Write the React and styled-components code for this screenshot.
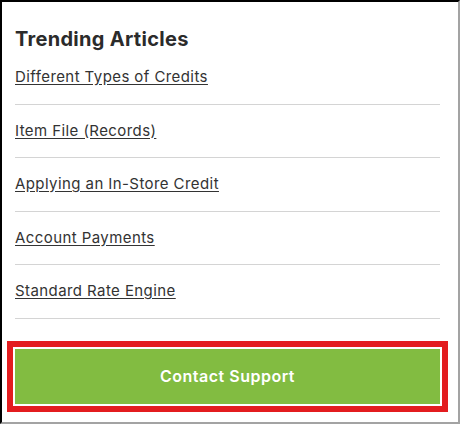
import React from "react";
import styled, { createGlobalStyle } from "styled-components";

const GlobalStyle = createGlobalStyle`
  html, body {
    margin: 0;
    padding: 0;
    background: #fff;
  }
  * {
    box-sizing: border-box;
  }
`;

const Panel = styled.section`
  width: 460px;
  height: 424px;
  border-top: 2px solid #000;
  border-left: 2px solid #000;
  border-right: 2px solid #a3a3a3;
  border-bottom: 2px solid #a3a3a3;
  padding: 24px 18px 0 13px;
  font-family: Inter, "Open Sans", Arial, sans-serif;
  background: #fff;
`;

const Title = styled.h2`
  margin: 0 0 15px;
  font-size: 20px;
  line-height: 26px;
  font-weight: 700;
  letter-spacing: 0.3px;
  color: #2b2b2b;
`;

const List = styled.ul`
  list-style: none;
  margin: 0;
  padding: 0;
`;

const Item = styled.li`
  padding: ${(p) => (p.first ? "0" : "16px")} 0 16px;
  border-bottom: 1px solid #d4d4d4;
  font-size: 15px;
  line-height: 20.5px;
`;

const ArticleLink = styled.a`
  font-size: 15px;
  letter-spacing: 0.42px;
  color: #333;
  text-decoration: underline;
  text-underline-offset: 2px;
`;

const Button = styled.button`
  display: block;
  width: 100%;
  height: 55px;
  margin-top: 30px;
  border: none;
  background: #82bc41;
  color: #fff;
  font-family: inherit;
  font-size: 16px;
  font-weight: 600;
  letter-spacing: 0.5px;
  box-shadow: 0 0 0 2px #fff, 0 0 0 8px #e31c1f;
  cursor: pointer;
`;

const articles = [
  "Different Types of Credits",
  "Item File (Records)",
  "Applying an In-Store Credit",
  "Account Payments",
  "Standard Rate Engine",
];

export default function App() {
  return (
    <>
      <GlobalStyle />
      <Panel>
        <Title>Trending Articles</Title>
        <List>
          {articles.map((a, i) => (
            <Item key={a} first={i === 0}>
              <ArticleLink href="#">{a}</ArticleLink>
            </Item>
          ))}
        </List>
        <Button>Contact Support</Button>
      </Panel>
    </>
  );
}
